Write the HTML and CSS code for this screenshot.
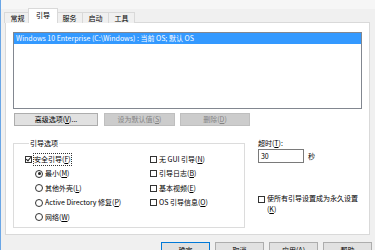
FILE: index.html
```html
<!DOCTYPE html>
<html lang="zh-CN">
<head>
    <meta charset="UTF-8">
    <title>系统配置</title>
    <link rel="stylesheet" href="styles.css">
</head>
<body>

<div class="window">
    <div class="topstrip"></div>

    <div class="tabs">
        <div class="tab">常规</div>
        <div class="tab selected">引导</div>
        <div class="tab">服务</div>
        <div class="tab">启动</div>
        <div class="tab">工具</div>
    </div>

    <div class="panel">
        <div class="listbox">
            <div class="listrow">Windows 10 Enterprise (C:\Windows) : 当前 OS; 默认 OS</div>
        </div>

        <div class="btnrow">
            <button class="btn b1">高级选项(<u>V</u>)...</button>
            <button class="btn b2" disabled>设为默认值(<u>S</u>)</button>
            <button class="btn b3" disabled>删除(<u>D</u>)</button>
        </div>

        <div class="lower">
            <fieldset class="group">
                <legend>引导选项</legend>
                <div class="cols">
                    <div class="col left">
                        <div class="opt"><span class="chk on"></span><span class="focus">安全引导(<u>F</u>)</span></div>
                        <div class="opt sub"><span class="radio on"></span>最小(<u>M</u>)</div>
                        <div class="opt sub"><span class="radio"></span>其他外壳(<u>L</u>)</div>
                        <div class="opt sub"><span class="radio"></span>Active Directory 修复(<u>P</u>)</div>
                        <div class="opt sub"><span class="radio"></span>网络(<u>W</u>)</div>
                    </div>
                    <div class="col right">
                        <div class="opt"><span class="chk"></span>无 GUI 引导(<u>N</u>)</div>
                        <div class="opt"><span class="chk"></span>引导日志(<u>B</u>)</div>
                        <div class="opt"><span class="chk"></span>基本视频(<u>E</u>)</div>
                        <div class="opt"><span class="chk"></span>OS 引导信息(<u>O</u>)</div>
                    </div>
                </div>
            </fieldset>

            <div class="side">
                <div class="timeout-label">超时(<u>T</u>):</div>
                <div class="timeout-row">
                    <div class="textbox">30</div>
                    <span>秒</span>
                </div>
                <div class="perm">
                    <span class="chk"></span>
                    <span class="perm-text">使所有引导设置成为永久设置(<u>K</u>)</span>
                </div>
            </div>
        </div>
    </div>

    <div class="footer">
        <button class="btn fb default">确定</button>
        <button class="btn fb">取消</button>
        <button class="btn fb">应用(<u>A</u>)</button>
        <button class="btn fb">帮助</button>
    </div>
</div>

</body>
</html>
```

FILE: styles.css
```css
body {
    margin: 0;
    width: 375px;
    height: 250px;
    overflow: hidden;
    background-color: #f0f0f0;
    font-family: "Noto Sans CJK SC", "Noto Sans", sans-serif;
    font-size: 7px;
    color: #000;
}
u {
    text-decoration: underline;
}
.window {
    height: 250px;
    border-left: 1px solid #6aa6e6;
}
.topstrip {
    height: 9px;
    background-color: #f6f6f6;
}

/* tabs */
.tabs {
    display: flex;
    align-items: flex-end;
    height: 14px;
    margin-left: 3px;
    margin-bottom: -1px;
}
.tab {
    height: 11px;
    line-height: 11px;
    width: 27px;
    text-align: center;
    border: 1px solid #d9d9d9;
    border-bottom: none;
    background-color: #f0f0f0;
    box-sizing: border-box;
    margin-right: -1px;
}
.tab.selected {
    height: 15px;
    line-height: 13px;
    width: 30px;
    margin-left: -2px;
    margin-right: -2px;
    background-color: #fff;
    position: relative;
    z-index: 1;
}

/* tab page */
.panel {
    margin-left: 4px;
    width: 365px;
    height: 213px;
    box-sizing: border-box;
    background-color: #fff;
    border: 1px solid #d9d9d9;
    padding: 9px 7px 0 7px;
}
.listbox {
    height: 77px;
    border: 1px solid #828790;
    box-sizing: border-box;
}
.listrow {
    height: 11px;
    line-height: 11px;
    background-color: #3399ff;
    color: #fff;
    padding-left: 2px;
    white-space: nowrap;
}

.btn {
    font-family: inherit;
    font-size: 7px;
    height: 13px;
    line-height: 11px;
    padding: 0;
    background-color: #e1e1e1;
    border: 1px solid #adadad;
    color: #000;
    box-sizing: border-box;
}
.btn:disabled {
    background-color: #cccccc;
    border-color: #bfbfbf;
    color: #838383;
}
.btnrow {
    display: flex;
    gap: 5px;
    margin-top: 4px;
    padding-left: 1px;
}
.b1 { width: 84px; margin-right: 1px; }
.b2 { width: 71px; }
.b3 { width: 70px; }

/* lower area */
.lower {
    display: flex;
    margin-top: 12px;
}
.group {
    margin: 0;
    width: 234px;
    height: 90px;
    box-sizing: border-box;
    border: 1px solid #dcdcdc;
    padding: 5px 0 0 11px;
}
.group legend {
    padding: 0 1px;
    margin-left: 4px;
    line-height: 11px;
}
.cols {
    display: flex;
}
.col {
    display: flex;
    flex-direction: column;
    gap: 3.4px;
}
.col.left {
    width: 125px;
}
.opt {
    display: flex;
    align-items: center;
    height: 11px;
    line-height: 11px;
    white-space: nowrap;
}
.opt.sub {
    padding-left: 10px;
}
.chk {
    width: 5px;
    height: 5px;
    border: 1px solid #333;
    background-color: #fff;
    margin-right: 2px;
    flex: none;
    position: relative;
}
.chk.on::after {
    content: "";
    position: absolute;
    left: 1px;
    top: -1px;
    width: 2px;
    height: 4px;
    border: solid #222;
    border-width: 0 1px 1px 0;
    transform: rotate(40deg);
}
.radio {
    width: 6px;
    height: 6px;
    border: 1px solid #333;
    border-radius: 50%;
    margin-right: 2px;
    flex: none;
    position: relative;
    background-color: #fff;
}
.radio.on::after {
    content: "";
    position: absolute;
    left: 1.5px;
    top: 1.5px;
    width: 3px;
    height: 3px;
    border-radius: 50%;
    background-color: #222;
}
.focus {
    outline: 1px dotted #333;
    outline-offset: 0;
}

.side {
    margin-left: 13px;
    display: flex;
    flex-direction: column;
    width: 105px;
}
.timeout-label {
    line-height: 11px;
}
.timeout-row {
    display: flex;
    align-items: center;
    gap: 4px;
    margin-top: 0;
}
.textbox {
    width: 46px;
    height: 14px;
    box-sizing: border-box;
    border: 1px solid #7a7a7a;
    line-height: 12px;
    padding-left: 2px;
}
.perm {
    display: flex;
    align-items: flex-start;
    margin-top: 30px;
}
.perm .chk {
    margin-top: 3px;
}
.perm-text {
    width: 93px;
    line-height: 11px;
}

/* bottom buttons */
.footer {
    display: flex;
    justify-content: flex-end;
    gap: 5px;
    margin-top: 7px;
    padding-right: 3px;
}
.fb {
    width: 49px;
    height: 16px;
}
.fb.default {
    border: 1px solid #0078d7;
}
```
